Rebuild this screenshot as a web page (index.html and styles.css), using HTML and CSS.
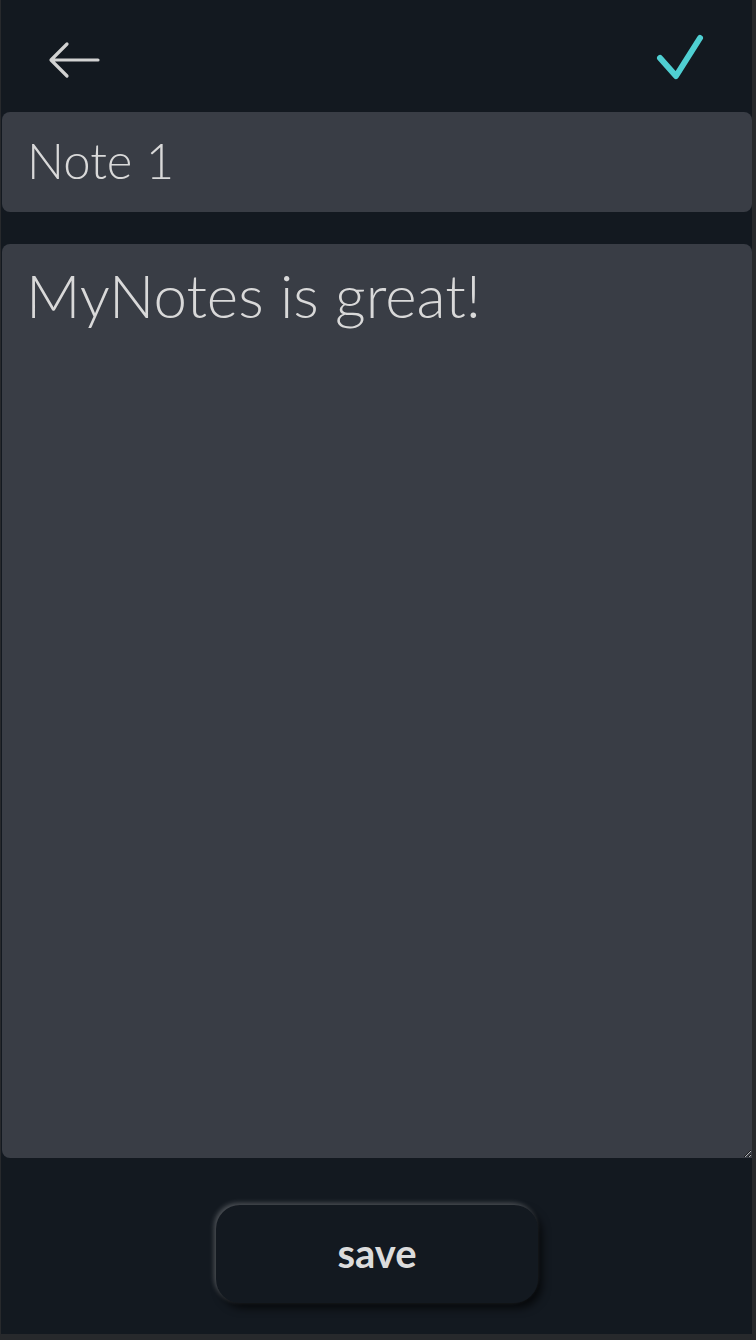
FILE: index.html
```html
<!DOCTYPE html>
<html>
<head>
<meta charset="utf-8">
<link rel="stylesheet" href="styles.css">
</head>
<body>
<div class="app">
  <header class="topbar">
    <button class="icon-btn back" aria-label="back">
      <svg width="56" height="40" viewBox="0 0 56 40"><path d="M50 19 H4 M19 3 L3 19 L19 35" fill="none" stroke="#d2d2d2" stroke-width="3.2" stroke-linecap="round" stroke-linejoin="round"/></svg>
    </button>
    <button class="icon-btn check" aria-label="done">
      <svg width="50" height="46" viewBox="0 0 50 46"><path d="M5 24 L21 42 L45 4" fill="none" stroke="#4fcfd2" stroke-width="6" stroke-linecap="round" stroke-linejoin="round"/></svg>
    </button>
  </header>
  <input class="title" type="text" value="Note 1">
  <textarea class="body">MyNotes is great!</textarea>
  <div class="actions">
    <button class="save">save</button>
  </div>
</div>
</body>
</html>
```
FILE: styles.css
```css
html, body {
  margin: 0;
  padding: 0;
  background: #27292c;
}
.app {
  box-sizing: border-box;
  width: 751px;
  height: 1334px;
  margin-left: 1px;
  background: #131920;
  display: flex;
  flex-direction: column;
  padding: 0 0 0 1px;
  font-family: Lato, "Open Sans", sans-serif;
}
.topbar {
  height: 112px;
  display: flex;
  justify-content: space-between;
  align-items: flex-start;
}
.icon-btn {
  background: none;
  border: none;
  padding: 0;
  cursor: pointer;
}
.back { margin: 41px 0 0 46px; }
.check { margin: 34px 47px 0 0; }
.title {
  box-sizing: border-box;
  height: 100px;
  border: none;
  border-radius: 8px;
  background: #393d45;
  color: #d9d9d9;
  font-family: Lato, sans-serif;
  font-weight: 300;
  font-size: 49px;
  padding: 0 0 4px 25px;
  outline: none;
}
.body {
  box-sizing: border-box;
  margin-top: 32px;
  height: 914px;
  border: none;
  border-radius: 8px 8px 0 8px;
  background: #393d45;
  color: #d9d9d9;
  font-family: Lato, sans-serif;
  font-weight: 300;
  font-size: 60px;
  line-height: 1.2;
  padding: 15px 24px;
  outline: none;
}
.actions {
  flex: 1;
  display: flex;
  justify-content: center;
  align-items: flex-start;
  padding-top: 47px;
}
.save {
  width: 322px;
  height: 98px;
  border: none;
  border-radius: 24px;
  background: #131920;
  color: #dcdcdc;
  font-family: Lato, sans-serif;
  font-weight: 700;
  font-size: 40px;
  box-shadow: -2px -2px 5px rgba(255,255,255,0.25), 4px 5px 8px rgba(0,0,0,0.7);
  padding-bottom: 4px;
}
```
